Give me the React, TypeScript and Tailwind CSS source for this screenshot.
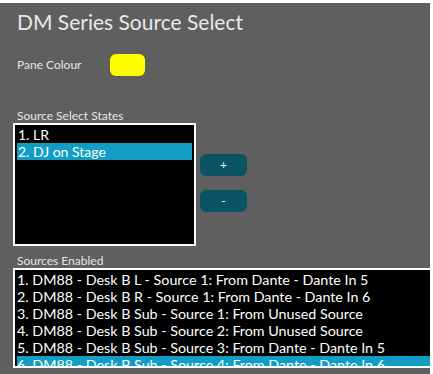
import React from 'react';

const states = ['1. LR', '2. DJ on Stage'];

const sources = [
    '1. DM88 - Desk B L - Source 1: From Dante - Dante In 5',
    '2. DM88 - Desk B R - Source 1: From Dante - Dante In 6',
    '3. DM88 - Desk B Sub - Source 1: From Unused Source',
    '4. DM88 - Desk B Sub - Source 2: From Unused Source',
    '5. DM88 - Desk B Sub - Source 3: From Dante - Dante In 5',
    '6. DM88 - Desk B Sub - Source 4: From Dante - Dante In 6',
];

const App: React.FC = () => {
    return (
        <div className="w-[433px] h-[374px] bg-white pt-[3px] pr-[3px] overflow-hidden" style={{ fontFamily: 'Lato, "Open Sans", sans-serif' }}>
            <div className="h-full bg-[#5f5f5f] text-[#e6e6e6] pl-[13px] overflow-hidden">
                <h1 className="text-[21px] leading-[26px] pt-[6px] pl-[4px] text-[#e8e8e8]">DM Series Source Select</h1>
                <div className="flex items-center mt-[19px] pl-[4px] h-[22px]">
                    <span className="text-[12px] w-[93px]">Pane Colour</span>
                    <div className="w-[35px] h-[22px] rounded-[6px] bg-[#ffff00]" />
                </div>
                <div className="text-[12px] leading-[14px] mt-[33px] pl-[4px]">Source Select States</div>
                <div className="flex items-start">
                    <div className="w-[183px] h-[123px] border-2 border-white bg-black px-[2px] pt-[1px] text-[14px] leading-[17px] text-white">
                        {states.map((s, i) => (
                            <div key={s} className={i === 1 ? 'bg-[#129ec4] px-[1px]' : 'px-[1px]'}>{s}</div>
                        ))}
                    </div>
                    <div className="flex flex-col gap-[14px] ml-[4px] mt-[31px]">
                        <button className="w-[47px] h-[22px] rounded-[6px] bg-[#0b5466] text-white text-[12px] leading-none">+</button>
                        <button className="w-[47px] h-[22px] rounded-[6px] bg-[#0b5466] text-white text-[12px] leading-none">-</button>
                    </div>
                </div>
                <div className="text-[12px] leading-[14px] mt-[8px] pl-[4px]">Sources Enabled</div>
                <div className="h-[100px] border-2 border-r-0 border-white bg-black pl-[2px] pt-[1px] text-[14.3px] leading-[17px] text-white overflow-hidden">
                    {sources.map((s, i) => (
                        <div key={s} className={i === 5 ? 'bg-[#129ec4] whitespace-nowrap' : 'whitespace-nowrap'}>{s}</div>
                    ))}
                </div>
            </div>
        </div>
    );
};

export default App;
